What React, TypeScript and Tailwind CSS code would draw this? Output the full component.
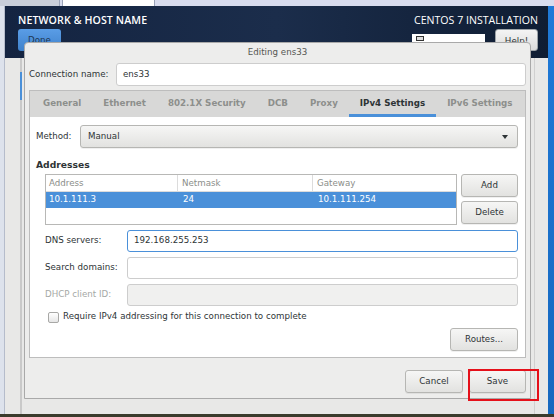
const btn =
  'flex items-center justify-center rounded-[3px] border border-[#b6b6b3] bg-gradient-to-b from-[#f6f6f5] to-[#e2e2e0] text-[#2e3436] shadow-[0_1px_0_rgba(0,0,0,0.06)]';

function Field({ label, value, focused, disabled }: { label: string; value?: string; focused?: boolean; disabled?: boolean }) {
  return (
    <div className="flex h-[22px] items-center">
      <div className={`w-[82px] ${disabled ? 'text-[#a5a8a5]' : 'text-[#2e3436]'}`}>{label}</div>
      <div
        className={`flex h-full flex-1 items-center rounded-[3px] border px-[6px] ${
          focused
            ? 'border-[#4a90d9] bg-white'
            : disabled
            ? 'border-[#cdcdcd] bg-[#f0f0ef]'
            : 'border-[#cdcdcd] bg-white'
        }`}
      >
        {value}
      </div>
    </div>
  );
}

export default function App() {
  const tabs = ['General', 'Ethernet', '802.1X Security', 'DCB', 'Proxy', 'IPv4 Settings', 'IPv6 Settings'];

  return (
    <div className="relative h-[417px] w-[554px] overflow-hidden bg-[#e8e8e7] font-['DejaVu_Sans',sans-serif] text-[8.7px] text-[#2e3436]">
      {/* VM tab strip */}
      <div className="flex h-[6px] bg-[#d8dcee]">
        <div className="w-[60px] border-r border-[#9aa3b8] bg-[#c9ced9]" />
        <div className="ml-[2px] w-[93px] border-x border-[#9aa3b8] bg-white" />
      </div>

      <div className="flex h-[408px]">
        {/* outer left frame */}
        <div className="w-[5px] border-r border-[#b5bccb] bg-[#dde2ec]" />

        {/* installer window */}
        <div className="flex w-[543px] flex-col">
          <div className="flex h-[52px] justify-between bg-gradient-to-r from-[#142441] via-[#1b2d4b] to-[#0f1d33] pl-[13px] pr-[10px] pt-[8px]">
            <div>
              <div className="font-['Open_Sans',sans-serif] text-[10.6px] font-semibold leading-[13px] tracking-[0.1px] text-white">
                NETWORK &amp; HOST NAME
              </div>
              <div className="mt-[2px] flex h-[22px] w-[43px] justify-center rounded-[3px] bg-gradient-to-b from-[#5a9de6] to-[#3f82cc] pt-[5px] text-[8.7px] text-[#1d3550]">
                Done
              </div>
            </div>
            <div className="flex flex-col items-end">
              <div className="font-['Open_Sans',sans-serif] text-[10.6px] leading-[13px] text-white">CENTOS 7 INSTALLATION</div>
              <div className="mt-[2px] flex items-start gap-[10px]">
                <div className="mt-[5px] h-[14px] w-[73px] bg-white pl-[4px] pt-[2px]">
                  <div className="h-[5px] w-[8px] border border-[#333] bg-[#ddd]" />
                </div>
                <div className="flex h-[22px] w-[43px] justify-center rounded-[3px] border border-[#9da3a8] bg-gradient-to-b from-[#f4f4f4] to-[#dcdcdc] pt-[5px] text-[#2e3436]">
                  Help!
                </div>
              </div>
            </div>
          </div>
          <div className="flex flex-1">
            <div className="w-[17px] border-r-2 border-[#c9c9c9]">
              <div className="ml-[15px] mt-[14px] h-[28px] w-[2px] bg-[#4a90d9]" />
            </div>
            <div className="flex-1" />
            <div className="w-[14px] border-l border-[#d0d0d0]" />
          </div>
        </div>

        {/* desktop edge */}
        <div className="flex-1 bg-gradient-to-b from-[#1f7ad8] to-[#1668bf]" />
      </div>
      <div className="h-[3px] bg-[#3a3b2c]" />

      {/* Editing dialog */}
      <div className="absolute left-[24px] top-[42px] flex h-[357px] w-[507px] flex-col rounded-t-[4px] border border-[#a9a9a9] bg-[#ededec] px-[4px] pb-[5px]">
        <div className="flex h-[20px] items-center justify-center text-[#555753]">Editing ens33</div>

        <div className="flex h-[23px] items-center">
          <div className="w-[87px]">Connection name:</div>
          <div className="flex h-full flex-1 items-center rounded-[3px] border border-[#cdcdcd] bg-white px-[6px]">ens33</div>
        </div>

        {/* notebook */}
        <div className="mt-[4px] flex h-[268px] flex-col border border-[#bdbdbd]">
          <div className="flex h-[26px] items-stretch bg-[#d8d8d7] pl-[2px] font-semibold">
            {tabs.map((t) => (
              <div
                key={t}
                className={`flex items-center px-[11px] ${
                  t === 'IPv4 Settings'
                    ? 'border-b-[3px] border-[#4a90d9] pt-[3px] text-[#2e3436]'
                    : 'text-[#8d8f8c]'
                }`}
              >
                {t}
              </div>
            ))}
          </div>

          <div className="flex flex-1 flex-col bg-white pl-[6px] pr-[7px] pt-[8px]">
            <div className="flex h-[23px] items-center">
              <div className="w-[44px]">Method:</div>
              <div className="flex h-full flex-1 items-center justify-between rounded-[3px] border border-[#b6b6b3] bg-gradient-to-b from-[#f6f6f5] to-[#e2e2e0] pl-[7px] pr-[9px] shadow-[0_1px_0_rgba(0,0,0,0.06)]">
                <span>Manual</span>
                <span className="h-0 w-0 border-x-[3.5px] border-t-[4px] border-x-transparent border-t-[#2e3436]" />
              </div>
            </div>

            <div className="mt-[10px] h-[12px] text-[9.2px] font-bold">Addresses</div>

            <div className="ml-[9px] mt-[4px] flex gap-[4px]">
              <div className="flex h-[51px] w-[412px] flex-col border border-[#b8b8b6]">
                <div className="flex h-[17px] items-center border-b border-[#dcdcdc] text-[#8b8e8a]">
                  <div className="h-full w-[132px] border-r border-[#dcdcdc] pl-[3px] leading-[16px]">Address</div>
                  <div className="h-full w-[135px] border-r border-[#dcdcdc] pl-[4px] leading-[16px]">Netmask</div>
                  <div className="h-full flex-1 pl-[4px] leading-[16px]">Gateway</div>
                </div>
                <div className="flex h-[16px] items-center bg-[#4a90d9] text-white">
                  <div className="w-[132px] pl-[3px]">10.1.111.3</div>
                  <div className="w-[135px] pl-[5px]">24</div>
                  <div className="flex-1 pl-[5px]">10.1.111.254</div>
                </div>
              </div>
              <div className="flex flex-col gap-[4px]">
                <div className={`${btn} h-[23px] w-[57px]`}>Add</div>
                <div className={`${btn} h-[23px] w-[57px]`}>Delete</div>
              </div>
            </div>

            <div className="ml-[9px] mt-[5px] flex flex-col gap-[5px]">
              <Field label="DNS servers:" value="192.168.255.253" focused />
              <Field label="Search domains:" />
              <Field label="DHCP client ID:" disabled />
            </div>

            <div className="ml-[12px] mt-[5px] flex h-[12px] items-center gap-[4px]">
              <div className="h-[11px] w-[11px] rounded-[2px] border border-[#a8a8a6] bg-gradient-to-b from-white to-[#e6e6e6]" />
              <span>Require IPv4 addressing for this connection to complete</span>
            </div>

            <div className="mt-[5px] flex justify-end">
              <div className={`${btn} h-[23px] w-[68px]`}>Routes...</div>
            </div>
          </div>
        </div>

        <div className="mt-auto flex justify-end gap-[6px]">
          <div className={`${btn} h-[23px] w-[58px]`}>Cancel</div>
          <div className={`${btn} h-[23px] w-[57px]`}>Save</div>
        </div>
      </div>

      {/* annotation */}
      <div className="absolute left-[468px] top-[369px] h-[32px] w-[71px] border-2 border-[#e5101a]" />
    </div>
  );
}
